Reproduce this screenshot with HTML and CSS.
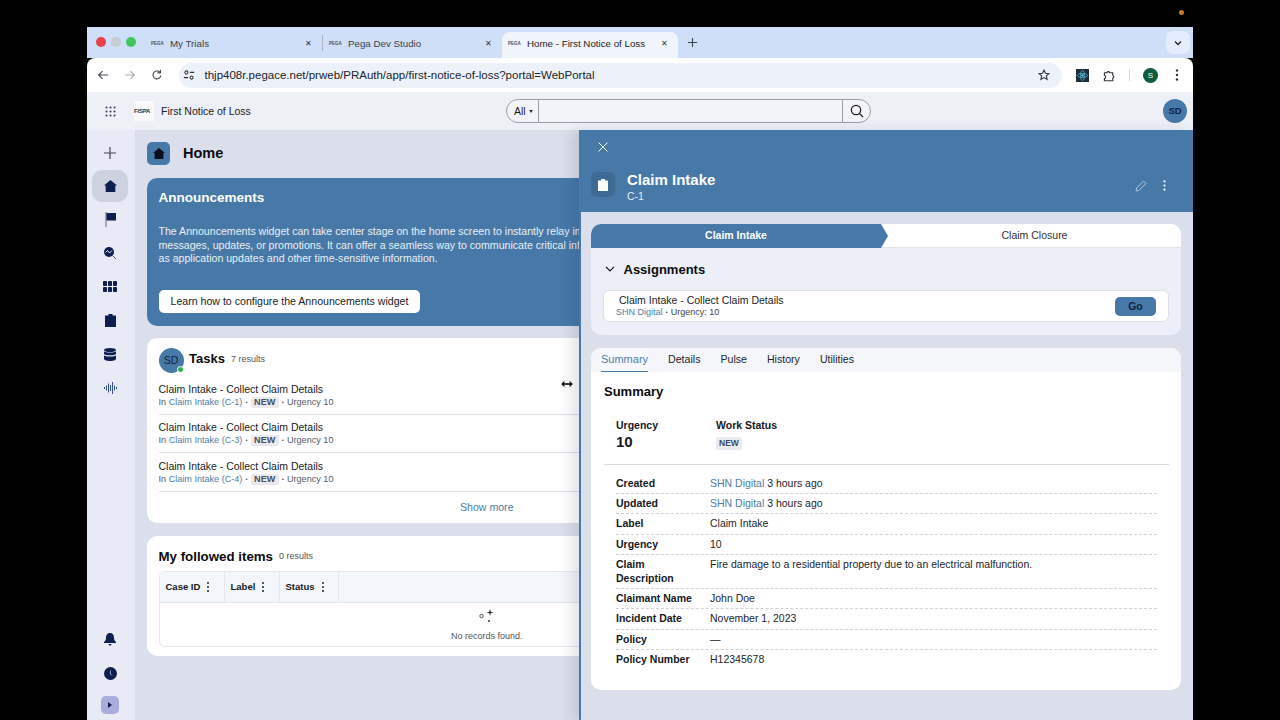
FILE: index.html
```html
<!DOCTYPE html>
<html>
  <head>
    <meta http-equiv="content-type" content="text/html; charset=UTF-8">
    <link rel="stylesheet" href="styles.css">
  </head>
  <body>
    <div class="camera-dot"></div>
    <div class="window">
      <!-- browser tabs -->
      <div class="tabstrip">
        <div class="lights"><i class="red"></i><i class="grey"></i><i class="green"></i></div>
        <div class="tab tab1"><span class="pega">PEGA</span><span class="tabname">My Trials</span><span class="tabx">&#10005;</span></div>
        <div class="tabsep"></div>
        <div class="tab tab2"><span class="pega">PEGA</span><span class="tabname">Pega Dev Studio</span><span class="tabx">&#10005;</span></div>
        <div class="tab active"><span class="pega">PEGA</span><span class="tabname">Home - First Notice of Loss</span><span class="tabx">&#10005;</span></div>
        <svg class="newtab" width="11" height="11" viewBox="0 0 12 12"><path d="M6 1v10M1 6h10" stroke="#3c4250" stroke-width="1.2"/></svg>
        <div class="tabmenu"><svg width="10" height="10" viewBox="0 0 10 10"><path d="M2 3.5 5 6.5 8 3.5" fill="none" stroke="#222" stroke-width="1.3"/></svg></div>
      </div>

      <!-- address bar -->
      <div class="toolbar">
        <svg class="navbtn" width="12" height="12" viewBox="0 0 14 14"><path d="M13 7H2M6.5 2.5 2 7l4.5 4.5" fill="none" stroke="#444a55" stroke-width="1.3"/></svg>
        <svg class="navbtn" width="12" height="12" viewBox="0 0 14 14"><path d="M1 7h11M7.500 2.500 12 7l-4.500 4.500" fill="none" stroke="#aab0b8" stroke-width="1.3"/></svg>
        <svg class="navbtn" width="12" height="12" viewBox="0 0 14 14"><path d="M11.500 7.500A4.600 4.600 0 1 1 10 3.500M11 1v3.500H7.500" fill="none" stroke="#444a55" stroke-width="1.3"/></svg>
        <div class="omnibox">
          <svg width="12" height="12" viewBox="0 0 14 14"><circle cx="4" cy="4" r="1.800" fill="none" stroke="#333" stroke-width="1.200"/><path d="M8 4h5M1 10h5" stroke="#333" stroke-width="1.300"/><circle cx="10" cy="10" r="1.800" fill="none" stroke="#333" stroke-width="1.200"/></svg>
          <span class="url">thjp408r.pegace.net/prweb/PRAuth/app/first-notice-of-loss?portal=WebPortal</span>
          <svg class="star" width="12" height="12" viewBox="0 0 14 14"><path d="M7 1.300 8.700 5l4 .4-3 2.700.9 4L7 10l-3.600 2.100.9-4-3-2.700 4-.4z" fill="none" stroke="#30343c" stroke-width="1.300"/></svg>
        </div>
        <svg class="ext" width="13" height="13" viewBox="0 0 13 13"><rect width="13" height="13" fill="#1d2f3a"/><circle cx="6.500" cy="6.500" r="1.300" fill="#62c4dc"/><ellipse cx="6.500" cy="6.500" rx="5" ry="2" fill="none" stroke="#62c4dc" stroke-width=".7"/><ellipse cx="6.500" cy="6.500" rx="2" ry="5" fill="none" stroke="#62c4dc" stroke-width=".7"/></svg>
        <svg class="puzzle" width="13" height="13" viewBox="0 0 14 14"><path d="M1.500 4h2.800a1.500 1.500 0 0 1 2.900 0h3.300v2.800a1.500 1.500 0 0 1 0 2.900v3H1.500V10a1.500 1.500 0 0 0 0-3z" fill="none" stroke="#30343c" stroke-width="1.200"/></svg>
        <div class="toolsep"></div>
        <div class="chromeuser">S</div>
        <svg class="chromedots" width="4" height="12" viewBox="0 0 4 12"><circle cx="2" cy="1.500" r="1.200" fill="#333"/><circle cx="2" cy="6" r="1.200" fill="#333"/><circle cx="2" cy="10.500" r="1.200" fill="#333"/></svg>
      </div>

      <!-- app header -->
      <div class="appbar">
        <svg class="apps" width="11" height="11" viewBox="0 0 11 11" fill="#30384c"><circle cx="1.500" cy="1.500" r="1"/><circle cx="5.500" cy="1.500" r="1"/><circle cx="9.500" cy="1.500" r="1"/><circle cx="1.500" cy="5.500" r="1"/><circle cx="5.500" cy="5.500" r="1"/><circle cx="9.500" cy="5.500" r="1"/><circle cx="1.500" cy="9.500" r="1"/><circle cx="5.500" cy="9.500" r="1"/><circle cx="9.500" cy="9.500" r="1"/></svg>
        <div class="logo">FISPA</div>
        <div class="appname">First Notice of Loss</div>
        <div class="search">
          <div class="searchall">All <span class="caret"></span></div>
          <div class="searchinput"></div>
          <div class="searchbtn"><svg width="14" height="14" viewBox="0 0 14 14"><circle cx="6" cy="6" r="4.700" fill="none" stroke="#222" stroke-width="1.200"/><path d="M9.500 9.500 13 13" stroke="#222" stroke-width="1.200"/></svg></div>
        </div>
        <div class="avatar top">SD</div>
      </div>

      <div class="app">
        <div class="sidebar">
          <div class="sideitems">
            <div class="sideitem"><svg width="14" height="14" viewBox="0 0 14 14"><path d="M7 1v12M1 7h12" stroke="#3c4458" stroke-width="1.200"/></svg></div>
            <div class="sideitem on"><svg width="13" height="12" viewBox="0 0 13 12"><path d="M6.500 0 13 5.500h-1.700V12H1.700V5.500H0z" fill="#0e1f4f"/></svg></div>
            <div class="sideitem"><svg width="11" height="15" viewBox="0 0 11 15"><path d="M.5 0h1v15h-1z" fill="#59607a"/><path d="M1.500 1H11v7.500H1.500z" fill="#0e1f4f"/></svg></div>
            <div class="sideitem"><svg width="14" height="14" viewBox="0 0 14 14"><circle cx="6" cy="6" r="5" fill="#0e1f4f"/><path d="M2.500 6.500 4.500 4.500 6.500 7 9 4.500" fill="none" stroke="#e8ebf5" stroke-width="1"/><path d="M9.500 9.500 13 13" stroke="#59607a" stroke-width="1"/></svg></div>
            <div class="sideitem"><svg width="14" height="11" viewBox="0 0 14 11" fill="#0e1f4f"><rect width="4" height="5" rx=".8"/><rect x="5" width="4" height="5" rx=".8"/><rect x="10" width="4" height="5" rx=".8"/><rect y="6" width="4" height="5" rx=".8"/><rect x="5" y="6" width="4" height="5" rx=".8"/><rect x="10" y="6" width="4" height="5" rx=".8"/></svg></div>
            <div class="sideitem"><svg width="11" height="13" viewBox="0 0 11 13"><path d="M0 1.500h3.500V0h4v1.500H11V13H0z" fill="#0e1f4f"/></svg></div>
            <div class="sideitem"><svg width="12" height="13" viewBox="0 0 12 13" fill="#0e1f4f"><ellipse cx="6" cy="2" rx="6" ry="2"/><path d="M0 3.300C1 5 11 5 12 3.300V6C11 7.700 1 7.700 0 6zM0 7.300C1 9 11 9 12 7.300V11c-1 2.700-11 2.700-12 0z"/></svg></div>
            <div class="sideitem"><svg width="13" height="12" viewBox="0 0 13 12"><path d="M.5 5v2M2.500 3.500v5M4.500 1.500v9M6.500 3v6M8.500 0v12M10.500 3.500v5M12.500 5v2" stroke="#33508a" stroke-width="1"/></svg></div>
          </div>
          <div class="sidebottom">
            <div class="sideitem"><svg width="12" height="13" viewBox="0 0 12 13"><path d="M6 0C3 0 2 2.500 2 5c0 2-1 3-2 4v1h12V9c-1-1-2-2-2-4 0-2.500-1-5-4-5zM4.500 11h3A1.500 1.500 0 0 1 4.500 11z" fill="#0e1f4f"/></svg></div>
            <div class="sideitem"><svg width="13" height="13" viewBox="0 0 13 13"><circle cx="6.500" cy="6.500" r="6.500" fill="#0e1f4f"/><path d="M6.500 3.500v3.500L8 8.500" fill="none" stroke="#8fa0c8" stroke-width="1"/></svg></div>
            <div class="expand"><svg width="6" height="6" viewBox="0 0 6 6"><path d="M1 0 5 3 1 6z" fill="#0e1f4f"/></svg></div>
          </div>
        </div>

        <div class="content">
          <div class="pagehead">
            <div class="pageicon"><svg width="12" height="11" viewBox="0 0 13 12"><path d="M6.500 0 13 5.500h-1.700V12H1.700V5.500H0z" fill="#0a0f1e"/></svg></div>
            <h1>Home</h1>
          </div>

          <div class="banner">
            <h2>Announcements</h2>
            <p>The Announcements widget can take center stage on the home screen to instantly relay important<br>messages, updates, or promotions. It can offer a seamless way to communicate critical information, such<br>as application updates and other time-sensitive information.</p>
            <div class="bannerbtn">Learn how to configure the Announcements widget</div>
          </div>

          <div class="card tasks">
            <div class="taskshead">
              <div class="avatar small">SD<i class="online"></i></div>
              <h3>Tasks</h3>
              <span class="count">7 results</span>
            </div>
            <div class="taskrow">
              <div class="tasktitle">Claim Intake - Collect Claim Details</div>
              <div class="tasksub">In <a>Claim Intake (C-1)</a> <b class="dot">&bull;</b> <span class="badge">NEW</span> <b class="dot">&bull;</b> Urgency 10</div>
            </div>
            <div class="taskrow">
              <div class="tasktitle">Claim Intake - Collect Claim Details</div>
              <div class="tasksub">In <a>Claim Intake (C-3)</a> <b class="dot">&bull;</b> <span class="badge">NEW</span> <b class="dot">&bull;</b> Urgency 10</div>
            </div>
            <div class="taskrow">
              <div class="tasktitle">Claim Intake - Collect Claim Details</div>
              <div class="tasksub">In <a>Claim Intake (C-4)</a> <b class="dot">&bull;</b> <span class="badge">NEW</span> <b class="dot">&bull;</b> Urgency 10</div>
            </div>
            <div class="showmore">Show more</div>
          </div>

          <div class="card followed">
            <div class="followedhead">
              <h3>My followed items</h3>
              <span class="count">0 results</span>
            </div>
            <div class="table">
              <div class="thead">
                <div class="th c1">Case ID<span class="vdots"></span></div>
                <div class="th c2">Label<span class="vdots"></span></div>
                <div class="th c3">Status<span class="vdots"></span></div>
              </div>
              <div class="tbody">
                <svg width="16" height="14" viewBox="0 0 16 14"><circle cx="2.500" cy="7" r="1.700" fill="none" stroke="#444" stroke-width=".9"/><path d="M11 0l.8 2.700 2.700.8-2.700.8L11 7l-.8-2.700-2.700-.8 2.700-.8z" fill="#333"/><circle cx="10" cy="12" r="1" fill="#333"/></svg>
                <span>No records found.</span>
              </div>
            </div>
          </div>
        </div>

        <!-- case panel, slides over the home page -->
        <div class="panel">
          <div class="panelhead">
            <svg class="panelclose" width="10" height="10" viewBox="0 0 10 10"><path d="M.5.500l9 9M9.500.500l-9 9" stroke="#fff" stroke-width="1"/></svg>
            <div class="caseline">
              <div class="caseicon"><svg width="10" height="12" viewBox="0 0 11 13"><path d="M0 1.500h3.500V0h4v1.500H11V13H0z" fill="#fff"/></svg></div>
              <div class="casetext">
                <div class="casename">Claim Intake</div>
                <div class="caseid">C-1</div>
              </div>
              <svg class="pencil" width="12" height="12" viewBox="0 0 12 12"><path d="M1 11l.6-3L8.500 1.100l2.400 2.400L4 10.400z" fill="none" stroke="#bcd0e2" stroke-width=".9"/></svg>
              <svg class="casedots" width="3" height="11" viewBox="0 0 3 11"><circle cx="1.500" cy="1.300" r="1.100" fill="#fff"/><circle cx="1.500" cy="5.500" r="1.100" fill="#fff"/><circle cx="1.500" cy="9.700" r="1.100" fill="#fff"/></svg>
            </div>
          </div>
          <div class="panelbody">
            <div class="stagecard">
              <div class="stages">
                <div class="stage current">Claim Intake</div>
                <div class="stage">Claim Closure</div>
              </div>
              <div class="assignhead">
                <svg width="10" height="6" viewBox="0 0 10 6"><path d="M1 .8 5 4.800 9 .8" fill="none" stroke="#111" stroke-width="1.200"/></svg>
                <h3>Assignments</h3>
              </div>
              <div class="assignbox">
                <div class="assigntext">
                  <div class="assigntitle">Claim Intake - Collect Claim Details</div>
                  <div class="assignsub"><a>SHN Digital</a> <b class="dot">&bull;</b> Urgency: 10</div>
                </div>
                <div class="gobtn">Go</div>
              </div>
            </div>

            <div class="detailcard">
              <div class="tabs">
                <div class="casetab on">Summary</div>
                <div class="casetab">Details</div>
                <div class="casetab">Pulse</div>
                <div class="casetab">History</div>
                <div class="casetab">Utilities</div>
              </div>
              <div class="detailinner">
                <h3>Summary</h3>
                <div class="keyfacts">
                  <div class="fact urgency">
                    <div class="factlabel">Urgency</div>
                    <div class="factvalue">10</div>
                  </div>
                  <div class="fact">
                    <div class="factlabel">Work Status</div>
                    <span class="badge light">NEW</span>
                  </div>
                </div>
                <div class="rows">
                  <div class="row"><div class="key">Created</div><div class="val"><a>SHN Digital</a> 3 hours ago</div></div>
                  <div class="row"><div class="key">Updated</div><div class="val"><a>SHN Digital</a> 3 hours ago</div></div>
                  <div class="row"><div class="key">Label</div><div class="val">Claim Intake</div></div>
                  <div class="row"><div class="key">Urgency</div><div class="val">10</div></div>
                  <div class="row"><div class="key">Claim Description</div><div class="val">Fire damage to a residential property due to an electrical malfunction.</div></div>
                  <div class="row"><div class="key">Claimant Name</div><div class="val">John Doe</div></div>
                  <div class="row"><div class="key">Incident Date</div><div class="val">November 1, 2023</div></div>
                  <div class="row"><div class="key">Policy</div><div class="val">&mdash;</div></div>
                  <div class="row last"><div class="key">Policy Number</div><div class="val">H12345678</div></div>
                </div>
              </div>
            </div>
          </div>
        </div>

        <svg class="cursor" width="12" height="8" viewBox="0 0 12 8"><path d="M0 4 3.500.5v2.500h5V.5L12 4 8.500 7.500V5h-5v2.500z" fill="#111" stroke="#ddd" stroke-width=".4"/></svg>
      </div>
    </div>
  </body>
</html>
```

FILE: styles.css
```css
html{background-color: black;}
body{
  margin: 0;
  height: 720px;
  overflow: hidden;
  background-color: black;
  font-family: "Liberation Sans", Arial, sans-serif;
  color: #1a1c22;
}
h1,h2,h3,p{margin: 0;}
a{color: #4d7ea8;}
.camera-dot{
  position: absolute;
  left: 1179px;
  top: 10px;
  width: 5px;
  height: 5px;
  border-radius: 50%;
  background-color: #c9781f;
}
.window{
  margin: 27px 0 0 87px;
  width: 1106px;
  height: 693px;
  display: flex;
  flex-direction: column;
  overflow: hidden;
}

/* browser tabs */
.tabstrip{
  height: 31px;
  flex: none;
  display: flex;
  align-items: flex-end;
  background-color: #cfdff7;
  position: relative;
}
.lights{
  width: 58px;
  height: 31px;
  flex: none;
  display: flex;
  align-items: center;
  gap: 5px;
  padding-left: 9px;
  padding-bottom: 1px;
  box-sizing: border-box;
}
.lights i{width: 10px; height: 10px; border-radius: 50%;}
.lights .red{background-color: #e9404c;}
.lights .grey{background-color: #c6ccd6;}
.lights .green{background-color: #3dc75a;}
.tab{
  height: 26px;
  display: flex;
  align-items: center;
  font-size: 9px;
  color: #3a3f4a;
  box-sizing: border-box;
  padding: 0 0 4px 6px;
}
.tab1{width: 177px;}
.tab2{width: 179px;}
.tabsep{width: 1px; height: 16px; margin-bottom: 7px; background-color: #a9b5c9;}
.tab.active{
  width: 176px;
  background-color: #f0f4fc;
  border-radius: 8px 8px 0 0;
  color: #1f2229;
}
.pega{
  width: 19px;
  flex: none;
  font-size: 4.500px;
  font-weight: bold;
  color: #4a4f5a;
}
.tabname{flex: 1; font-size: 9.750px;}
.tabx{width: 17.500px; font-size: 8px; color: #333;}
.newtab{margin: 0 0 10px 9px;}
.tabmenu{
  position: absolute;
  right: 3px;
  top: 4px;
  width: 24px;
  height: 23px;
  border-radius: 7px;
  background-color: #e4edfb;
  display: flex;
  align-items: center;
  justify-content: center;
}

/* address bar */
.toolbar{
  height: 34px;
  flex: none;
  background-color: #fff;
  border-radius: 8px 8px 0 0;
  display: flex;
  align-items: center;
  padding-left: 10px;
  box-sizing: border-box;
}
.navbtn{margin-right: 15px;}
.omnibox{
  width: 883px;
  height: 25px;
  border-radius: 13px;
  background-color: #edf2fa;
  display: flex;
  align-items: center;
  padding: 0 12px 0 4px;
  margin-left: 1px;
  box-sizing: border-box;
}
.url{flex: 1; margin-left: 9.500px; font-size: 11.500px; color: #20242c;}
.ext{margin-left: 14px;}
.puzzle{margin-left: 14px;}
.toolsep{width: 1px; height: 12px; margin-left: 13px; background-color: #d5d8de;}
.chromeuser{
  width: 15px;
  height: 15px;
  margin-left: 13px;
  border-radius: 50%;
  background-color: #0f5c3a;
  color: #fff;
  font-size: 8px;
  text-align: center;
  line-height: 15px;
}
.chromedots{margin-left: 17px;}

/* app header */
.appbar{
  height: 38px;
  flex: none;
  background-color: #eef0f8;
  display: flex;
  align-items: center;
  position: relative;
}
.apps{margin-left: 18px;}
.logo{
  width: 20px;
  height: 20px;
  margin-left: 18px;
  background-color: #fafafa;
  font-size: 6px;
  font-weight: bold;
  line-height: 20px;
  color: #333;
  text-align: left;
  letter-spacing: -.2px;
}
.appname{margin-left: 7px; font-size: 10.500px; color: #222;}
.search{
  position: absolute;
  left: 419px;
  top: 7px;
  width: 365px;
  height: 24px;
  display: flex;
  box-sizing: border-box;
  border: 1px solid #9a9ea8;
  border-radius: 12px;
  background-color: #f3f4fa;
}
.searchall{
  width: 32px;
  flex: none;
  font-size: 10.500px;
  line-height: 22px;
  padding-left: 7px;
  box-sizing: border-box;
  border-right: 1px solid #9a9ea8;
}
.caret{
  display: inline-block;
  border: 2.500px solid transparent;
  border-top: 3px solid #333;
  border-bottom: 0;
  vertical-align: 2px;
}
.searchinput{flex: 1;}
.searchbtn{
  width: 27px;
  flex: none;
  border-left: 1px solid #9a9ea8;
  display: flex;
  align-items: center;
  justify-content: center;
}
.avatar{
  border-radius: 50%;
  background-color: #4679a8;
  color: #10213f;
  text-align: center;
}
.avatar.top{
  position: absolute;
  right: 6px;
  top: 7px;
  width: 24px;
  height: 24px;
  line-height: 24px;
  font-size: 9.500px;
  font-weight: bold;
}

/* app body */
.app{
  flex: 1;
  min-height: 0;
  display: flex;
  position: relative;
  background-color: #dbdfeb;
}
.sidebar{
  width: 48px;
  flex: none;
  box-sizing: border-box;
  padding-right: 2px;
  background-color: #e8ebf5;
  display: flex;
  flex-direction: column;
  justify-content: space-between;
}
.sideitems{padding-top: 6px;}
.sideitem{
  height: 33.700px;
  display: flex;
  align-items: center;
  justify-content: center;
}
.sideitem.on{
  margin: 0 5px 1px;
  height: 32px;
  border-radius: 10px;
  background-color: #cdd2e0;
}
.sidebottom{padding-bottom: 6px;}
.expand{
  width: 18px;
  height: 18px;
  margin: 6px 0 0 14px;
  border-radius: 5px;
  background-color: #a9addb;
  display: flex;
  align-items: center;
  justify-content: center;
}
.content{
  width: 680px;
  padding: 12px 0 0 12px;
  flex: none;
}
.pagehead{
  height: 23px;
  display: flex;
  align-items: center;
  gap: 13px;
}
.pageicon{
  width: 23px;
  height: 23px;
  border-radius: 5px;
  background-color: #4679a8;
  display: flex;
  align-items: center;
  justify-content: center;
}
h1{font-size: 14.500px; color: #0c0c10; margin-bottom: 2px;}
.banner{
  margin-top: 13px;
  height: 148px;
  box-sizing: border-box;
  padding: 12px 12px 0 11.500px;
  border-radius: 10px;
  background-color: #4679a8;
  color: #fff;
}
.banner h2{font-size: 13.500px; line-height: 16px;}
.banner p{
  margin-top: 19px;
  font-size: 10.600px;
  line-height: 13.600px;
  color: #eaf0f6;
  white-space: nowrap;
}
.bannerbtn{
  display: inline-block;
  margin-top: 24px;
  padding: 0 12px;
  height: 23px;
  line-height: 23px;
  border-radius: 5px;
  background-color: #fff;
  color: #1a1c22;
  font-size: 10.600px;
}
.card{
  margin-top: 12px;
  border-radius: 10px;
  background-color: #fff;
  box-sizing: border-box;
  padding: 0 12px 0 11.500px;
}
.tasks{height: 185px; padding-top: 10px;}
.taskshead{
  height: 25px;
  display: flex;
  align-items: center;
  margin-bottom: 3px;
}
.avatar.small{
  width: 25px;
  height: 25px;
  line-height: 25px;
  font-size: 10.500px;
  position: relative;
}
.online{
  position: absolute;
  right: 0;
  bottom: 0;
  width: 7px;
  height: 7px;
  border-radius: 50%;
  background-color: #2fb04f;
  border: 1px solid #fff;
  box-sizing: border-box;
}
.taskshead h3{margin: 0 0 4px 5.500px; font-size: 13px; color: #0c0c10;}
.count{margin: 0 0 4px 6px; font-size: 9px; color: #555;}
.taskrow{
  height: 38.500px;
  box-sizing: border-box;
  padding-top: 6.500px;
  border-bottom: 1px solid #dfe1e6;
}
.tasktitle{font-size: 10.500px; line-height: 13px; color: #1a1c22;}
.tasksub{font-size: 9.100px; line-height: 13px; color: #555a64;}
.dot{font-weight: normal; font-size: 6px; margin: 0 .5px; vertical-align: 1px;}
.badge{
  display: inline-block;
  padding: 0 3.500px;
  line-height: 11px;
  border-radius: 2px;
  background-color: #e8eaef;
  font-weight: bold;
  color: #4a4e58;
}
.showmore{
  height: 31.800px;
  line-height: 31.800px;
  text-align: center;
  font-size: 10.600px;
  color: #4d7ea8;
}
.followed{margin-top: 13px; height: 120px; padding-top: 12px;}
.followedhead{height: 16px; display: flex; align-items: center;}
.followedhead h3{font-size: 13.300px; color: #0c0c10;}
.followedhead .count{margin: 0 0 0 6px;}
.table{
  margin-top: 7px;
  height: 76px;
  border: 1px solid #e4e7ee;
  border-radius: 6px;
  box-sizing: border-box;
}
.thead{
  height: 30px;
  display: flex;
  background-color: #f3f6fb;
  border-bottom: 1px solid #e4e7ee;
}
.th{
  display: flex;
  align-items: center;
  box-sizing: border-box;
  padding: 0 0 1px 6px;
  font-size: 9.500px;
  font-weight: bold;
  color: #161a24;
  border-right: 1px solid #e4e7ee;
}
.c1{width: 65px;}
.c2{width: 55px;}
.c3{width: 59px;}
.vdots{
  width: 2px;
  height: 2px;
  margin-left: 7px;
  border-radius: 50%;
  background-color: #222;
  box-shadow: 0 -4px 0 #222, 0 4px 0 #222;
}
.tbody{
  height: 44px;
  display: flex;
  flex-direction: column;
  align-items: center;
  font-size: 9px;
  color: #555;
  padding-top: 6px;
  box-sizing: border-box;
}
.tbody span{margin-top: 8px;}

/* case panel */
.panel{
  position: absolute;
  left: 492px;
  top: 0;
  right: 0;
  bottom: 0;
  background-color: #dbdfeb;
  border-left: 2px solid #4679a8;
  box-shadow: -8px 0 12px rgba(30, 40, 70, .12);
  box-sizing: border-box;
}
.panelhead{
  height: 82px;
  background-color: #4679a8;
  box-sizing: border-box;
  padding: 12px 12px 0 10px;
  color: #fff;
}
.panelclose{display: block; margin: 0 0 0 7px;}
.caseline{
  height: 25px;
  display: flex;
  align-items: center;
  margin-top: 20px;
}
.caseicon{
  width: 24px;
  height: 25px;
  flex: none;
  border-radius: 5px;
  background-color: #3f6a93;
  display: flex;
  align-items: center;
  justify-content: center;
}
.casetext{flex: 1; margin: 5px 0 0 12px;}
.casename{font-size: 15px; line-height: 18px; font-weight: bold;}
.caseid{font-size: 10.500px; line-height: 15px; color: #e4ecf4;}
.pencil{margin: 2px 16px 0 0;}
.casedots{margin: 2px 15px 0 0;}
.panelbody{padding: 12px 12px 0 10px;}
.stagecard{
  height: 111px;
  border-radius: 10px;
  background-color: #eceff7;
  overflow: hidden;
}
.stages{
  height: 24px;
  display: flex;
  background-color: #fff;
  border-bottom: 1px solid #e0e3ea;
  box-sizing: border-box;
}
.stage{
  flex: 1;
  text-align: center;
  font-size: 10.500px;
  line-height: 23px;
  color: #333;
}
.stage.current{
  flex: none;
  width: 297px;
  padding-right: 7px;
  box-sizing: border-box;
  height: 24px;
  background-color: #4679a8;
  color: #fff;
  font-weight: bold;
  clip-path: polygon(0 0, 290px 0, 100% 50%, 290px 100%, 0 100%);
}
.assignhead{
  margin: 12px 0 0 14px;
  height: 18px;
  display: flex;
  align-items: center;
  gap: 8.500px;
}
.assignhead h3{font-size: 13px; color: #0c0c10;}
.assignbox{
  margin: 12px 12px 0;
  height: 32px;
  border: 1px solid #dcdfe6;
  border-radius: 6px;
  background-color: #fff;
  box-sizing: border-box;
  display: flex;
  align-items: center;
  justify-content: space-between;
  padding: 0 12px;
}
.assigntitle{font-size: 10.500px; line-height: 12px; margin-left: 3px; color: #1a1c22;}
.assignsub{font-size: 9px; line-height: 12px; color: #444;}
.gobtn{
  width: 41px;
  height: 19px;
  line-height: 19px;
  border-radius: 5px;
  background-color: #4679a8;
  text-align: center;
  font-size: 10.500px;
  font-weight: bold;
  color: #10213f;
}
.detailcard{
  margin-top: 13px;
  height: 342px;
  border-radius: 10px;
  background-color: #fff;
  overflow: hidden;
}
.tabs{
  height: 24px;
  display: flex;
  background-color: #f5f6fa;
  padding-left: 10px;
  gap: 20px;
}
.casetab{
  font-size: 10.600px;
  line-height: 23px;
  color: #22252c;
}
.casetab.on{
  font-size: 11px;
  color: #4d7ea8;
  height: 24px;
  box-sizing: border-box;
  border-bottom: 1px solid #4679a8;
  background-color: #f8f9fc;
}
.detailinner{padding: 11px 12px 0 13px;}
.detailinner h3{font-size: 13px; line-height: 18px; color: #0c0c10;}
.keyfacts{
  margin-top: 17.500px;
  height: 45px;
  padding-left: 12px;
  display: flex;
  border-bottom: 1px solid #d8dbe1;
}
.urgency{width: 100px;}
.factlabel{font-size: 10.500px; line-height: 13px; font-weight: bold; color: #16181e;}
.factvalue{margin-top: 1.500px; font-size: 15px; line-height: 18px; font-weight: bold; color: #16181e;}
.badge.light{
  margin-top: 4.500px;
  font-size: 8.500px;
  line-height: 13px;
  padding: 0 3px;
  background-color: #e8ecf2;
  color: #3d4a5c;
}
.rows{padding: 9.200px 12px 0;}
.row{
  display: grid;
  grid-template-columns: 94px 1fr;
  padding: 3px 0 2.850px;
  border-bottom: 1px dashed #d0d2d6;
  font-size: 10.500px;
  line-height: 13.500px;
  box-sizing: border-box;
}
.row.last{border-bottom: none;}
.key{font-weight: bold; color: #16181e; padding-right: 12px;}
.val{color: #22252c;}
.cursor{
  position: absolute;
  left: 474px;
  top: 250px;
}
```
